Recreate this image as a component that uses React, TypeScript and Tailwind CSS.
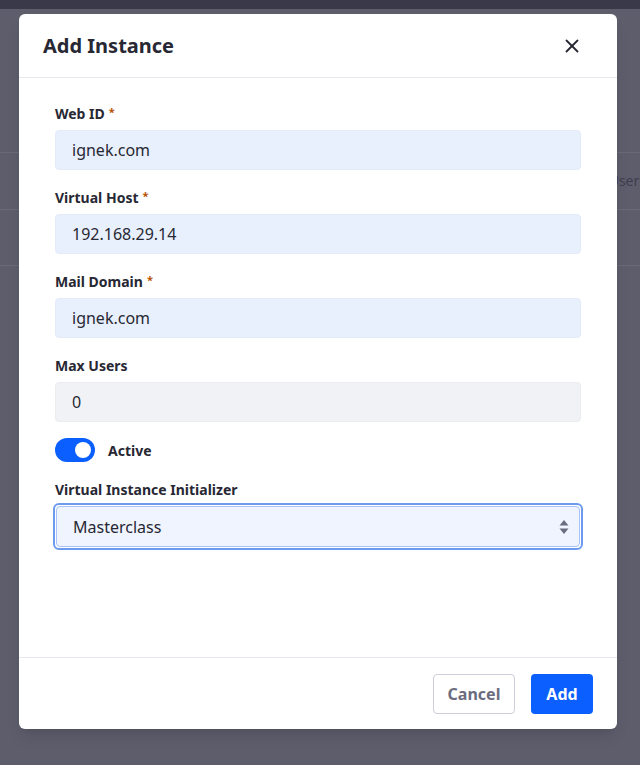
import { X } from 'lucide-react';

const fields = [
  { label: 'Web ID', value: 'ignek.com', required: true },
  { label: 'Virtual Host', value: '192.168.29.14', required: true },
  { label: 'Mail Domain', value: 'ignek.com', required: true },
];

function Label({ text, required }: { text: string; required?: boolean }) {
  return (
    <div className="h-5 flex items-center text-[14px] font-bold text-[#272833] leading-5 mb-[6px]">
      {text}
      {required && <span className="ml-1 text-[#b95000] text-[11px] self-start -mt-[2px]">*</span>}
    </div>
  );
}

export default function App() {
  return (
    <div className="relative h-[765px] w-[640px] overflow-hidden bg-[#5e5d6c] font-['Noto_Sans',sans-serif]">
      {/* backdrop page */}
      <div className="h-[9px] bg-[#3a3949]" />
      <div className="h-[144px] border-b border-[#6a6978]" />
      <div className="h-[57px] border-b border-[#6a6978] flex items-center justify-end">
        <span className="text-[14px] text-[#3e3d4d] mr-[-6px] mt-[-2px]">Users</span>
      </div>
      <div className="h-[56px] border-b border-[#6a6978]" />

      {/* modal */}
      <div className="absolute left-[19px] top-[14px] w-[598px] h-[715px] bg-white rounded-[6px] shadow-lg flex flex-col">
        <div className="h-[64px] shrink-0 border-b border-[#e7e7ed] flex items-center justify-between pl-6 pr-[34px]">
          <h1 className="text-[20px] font-bold text-[#272833]">Add Instance</h1>
          <X className="h-[22px] w-[22px] text-[#272833]" strokeWidth={2} />
        </div>

        <div className="flex-1 px-9 pt-[26px]">
          {fields.map((f) => (
            <div key={f.label} className="mb-[18px]">
              <Label text={f.label} required={f.required} />
              <div className="h-10 rounded-[4px] bg-[#e9f0fd] border border-[#e3eaf8] flex items-center px-4 text-[16px] text-[#272833]">
                {f.value}
              </div>
            </div>
          ))}
          <div className="mb-4">
            <Label text="Max Users" />
            <div className="h-10 rounded-[4px] bg-[#f1f2f5] border border-[#ebecf0] flex items-center px-4 text-[16px] text-[#272833]">
              0
            </div>
          </div>
          <div className="flex items-center h-6 mb-[18px]">
            <div className="w-10 h-6 rounded-full bg-[#0b5fff] flex items-center justify-end pr-[4px]">
              <div className="w-4 h-4 rounded-full bg-white" />
            </div>
            <span className="ml-[13px] text-[14px] font-bold text-[#272833]">Active</span>
          </div>
          <div>
            <Label text="Virtual Instance Initializer" />
            <div className="-mx-[2px] -mt-[3px] rounded-[6px] border-2 border-[#6d9aef] p-px">
              <div className="h-[41px] rounded-[4px] bg-[#eff4fe] border border-[#a8c3f5] flex items-center justify-between pl-4 pr-[10px] text-[16px] text-[#272833]">
                <span>Masterclass</span>
                <svg width="10" height="16" viewBox="0 0 10 16" className="text-[#6b6c7e]">
                  <path d="M5 1 L9.5 6.5 H0.5 Z" fill="currentColor" />
                  <path d="M5 15 L9.5 9.5 H0.5 Z" fill="currentColor" />
                </svg>
              </div>
            </div>
          </div>
        </div>

        <div className="h-[72px] shrink-0 border-t border-[#e7e7ed] flex items-center justify-end gap-4 pr-6">
          <button className="h-10 w-[82px] rounded-[4px] border border-[#cdced9] bg-white text-[16px] font-bold text-[#6b6c7e]">
            Cancel
          </button>
          <button className="h-10 w-[62px] rounded-[4px] bg-[#0b5fff] text-[16px] font-bold text-white">
            Add
          </button>
        </div>
      </div>
    </div>
  );
}
